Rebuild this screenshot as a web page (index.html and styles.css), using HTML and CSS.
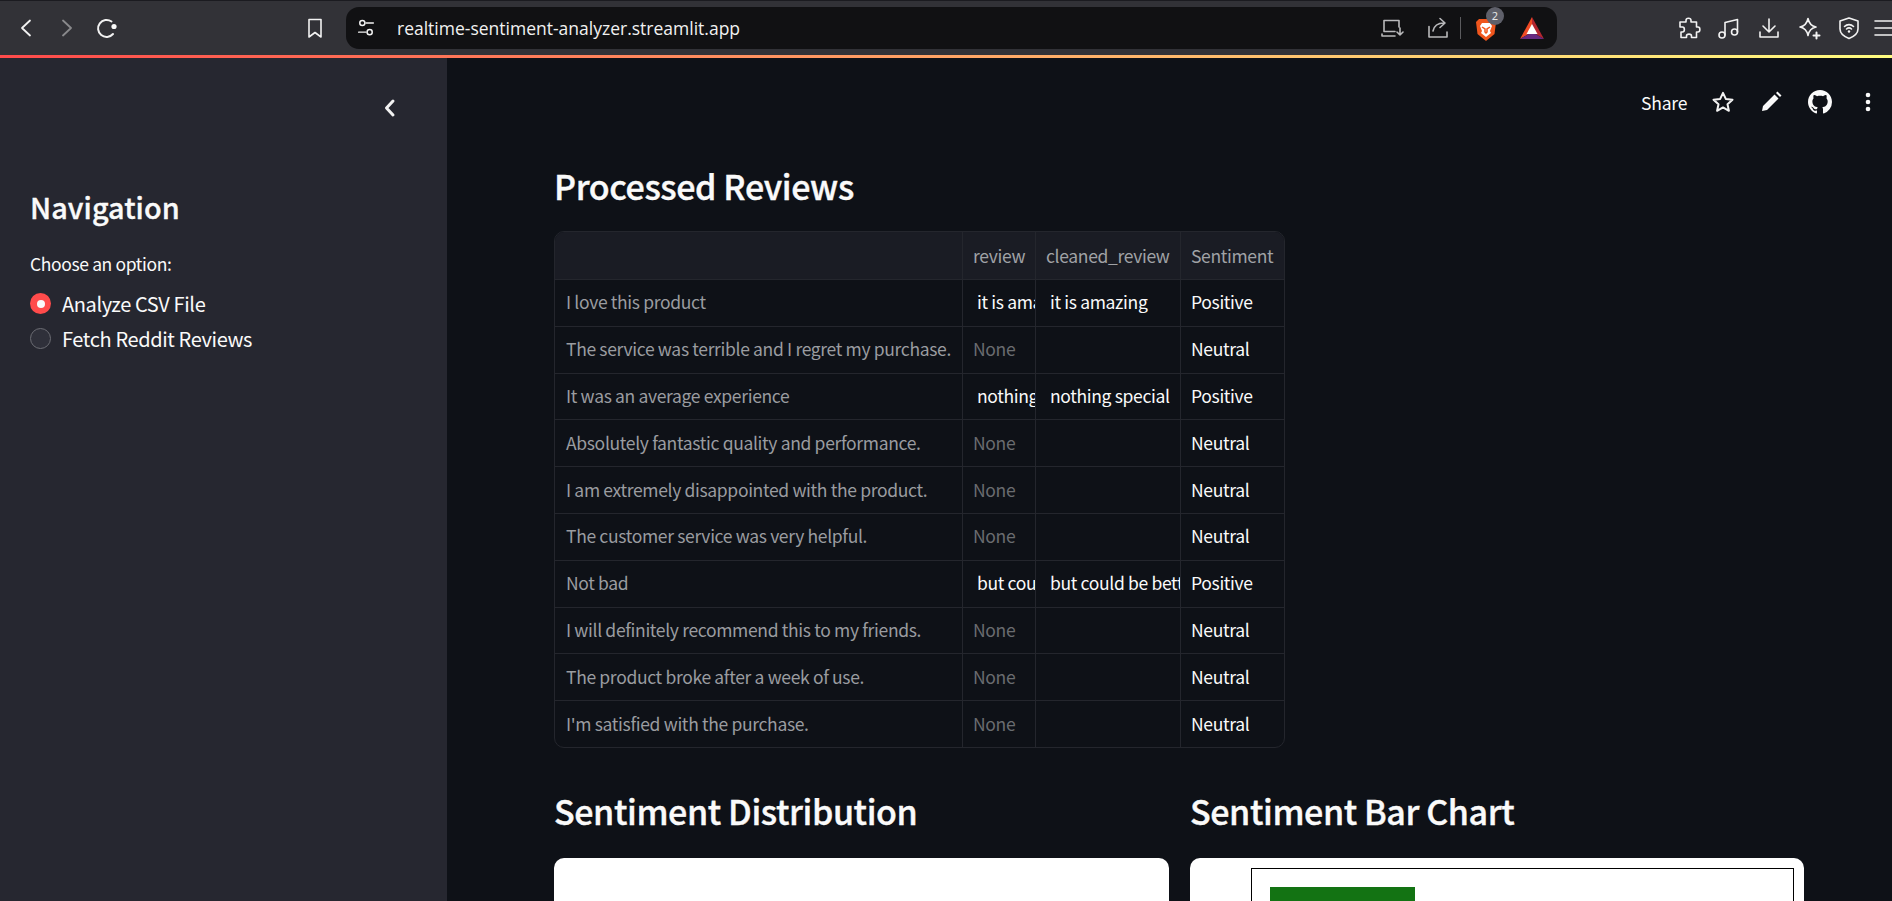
FILE: index.html
```html
<!DOCTYPE html>
<html lang="en">
<head>
<meta charset="utf-8">
<title>Processed Reviews</title>
<link rel="stylesheet" href="styles.css">
</head>
<body>
<header class="chrome">
  <svg class="ic nav-back" viewBox="0 0 24 24"><path d="M16 4.500 8 12l8 7.500" class="st w15"/></svg>
  <svg class="ic nav-fwd" viewBox="0 0 24 24"><path d="m8 4.500 8 7.500-8 7.500" class="st w15"/></svg>
  <svg class="ic nav-reload" viewBox="0 0 24 24"><path d="M18 18a8.500 8.500 0 1 1-1.500-12.500" class="st w2"/><circle cx="19" cy="10.500" r="2.600" class="fl"/></svg>
  <svg class="ic nav-mark" viewBox="0 0 24 24"><path d="M6 3.500h12v17.500l-6-4.500-6 4.500z" class="st"/></svg>
  <div class="urlbar">
    <svg class="ic tune" viewBox="0 0 24 24"><circle cx="8" cy="6.500" r="2.800" class="st"/><path d="M12 6.500h8M4 16.500h8" class="st"/><circle cx="16" cy="16.500" r="2.800" class="st"/></svg>
    <span class="url">realtime-sentiment-analyzer.streamlit.app</span>
    <svg class="ic cast" viewBox="0 0 24 24"><path d="M19 11V4.500H4v11M2 18v2h13M4 15.500h11M20 12v7m-3-3 3 3 3-3" class="st dim"/></svg>
    <svg class="ic share" viewBox="0 0 24 24"><path d="M4 10.500v10.500h18v-5M8 15c1-5 5-8 11-8m-4-4.500 5 4.500-5 4.500" class="st dim"/></svg>
    <span class="sep"></span>
    <span class="brave">
      <svg class="ic" viewBox="0 0 24 24"><path d="M5 2h14l3 3-1.500 12L12 24 3.500 17 2 5z" class="orange"/><path d="M8 6h8l2 3-2 5 1 2-5 4-5-4 1-2-2-5z" class="lion"/><path d="m8 10 3 2v3l1 1 1-1v-3l3-2" class="lionline"/></svg>
      <b class="badge">2</b>
    </span>
    <svg class="ic bat" viewBox="0 0 26 24"><path d="M13 1 1 23l12-7z" class="bat-l"/><path d="M13 1v15l12 7z" class="bat-r"/><path d="m1 23 12-7 12 7z" class="bat-b"/><path d="m13 8-5.500 10h11z" class="bat-c"/></svg>
  </div>
  <svg class="ic puzzle" viewBox="0 0 24 24"><path d="M9 4.500C9 1.500 14 1.500 14 4.500V6h5.500v5h1.500c2.500 0 2.500 5 0 5h-1.500v5.500H14.500V20c0-2.500-5-2.500-5 0v1.500H4V16h1.500c2.500 0 2.500-5 0-5H3V6h6z" class="st"/></svg>
  <svg class="ic music" viewBox="0 0 24 24"><path d="M8 19V6.500L20.500 3.500V16" class="st"/><circle cx="5" cy="19" r="3" class="st"/><circle cx="17.500" cy="16" r="3" class="st"/></svg>
  <svg class="ic down" viewBox="0 0 24 24"><path d="M12 3v13m-6-6 6 6 6-6M3 16v5h18v-5" class="st"/></svg>
  <svg class="ic spark" viewBox="0 0 24 24"><path d="M11 2.500c1 5 3 7.500 8 8.500-5 1-7 3.500-8 8.500-1-5-3-7.500-8-8.500 5-1 7-3.500 8-8.500z" class="st"/><path d="M19.500 16.500v6M16.500 19.500h6" class="st w2"/></svg>
  <svg class="ic shield" viewBox="0 0 24 24"><path d="M12 2 21 5v8c0 4-4 7.500-9 9.500C7 20.500 3 17 3 13V5z" class="st"/><path d="M7.500 10.500c2.500-2.500 6.500-2.500 9 0M9.500 13c1.500-1.300 3.500-1.300 5 0" class="st"/><circle cx="12" cy="15.500" r="1.200" class="fl"/></svg>
  <svg class="ic menu" viewBox="0 0 24 24"><path d="M2 5h22M2 12h22M2 19h22" class="st"/></svg>
</header>
<div class="deco"></div>
<div class="app">
  <aside class="sidebar">
    <div class="collapse">
      <svg class="chev" viewBox="0 0 24 24"><path d="M15 5 8.500 12l6.500 7" class="st w3"/></svg>
    </div>
    <h2 class="nav-title">Navigation</h2>
    <div class="radio-label">Choose an option:</div>
    <div class="radio-row"><span class="dot on"></span><span>Analyze CSV File</span></div>
    <div class="radio-row"><span class="dot"></span><span>Fetch Reddit Reviews</span></div>
  </aside>
  <main class="main">
    <div class="topbar">
      <span class="share-txt">Share</span>
      <svg class="tb-ic star" viewBox="0 0 24 24"><path d="m12 2.800 2.800 6.100 6.700.8-5 4.500 1.400 6.600-5.900-3.400-5.900 3.400 1.400-6.600-5-4.500 6.700-.8z" class="st w2"/></svg>
      <svg class="tb-ic pen" viewBox="0 0 24 24"><path d="M3 21l1-5L15.500 4.500l4 4L8 20zM17 3l1.500-1.500 4 4L21 7z" class="fl"/></svg>
      <svg class="tb-ic gh" viewBox="0 0 16 16"><path class="fl" d="M8 0C3.580 0 0 3.580 0 8c0 3.540 2.290 6.530 5.470 7.590.4.070.55-.17.55-.38 0-.19-.01-.82-.01-1.490-2.010.37-2.530-.49-2.690-.94-.09-.23-.48-.94-.82-1.130-.28-.15-.68-.52-.01-.53.630-.01 1.080.58 1.230.82.720 1.210 1.870.870 2.330.660.070-.520.280-.870.510-1.070-1.780-.2-3.640-.890-3.640-3.950 0-.870.310-1.590.820-2.150-.08-.2-.36-1.020.08-2.120 0 0 .67-.21 2.200.820.640-.18 1.320-.27 2-.27s1.360.09 2 .27c1.530-1.040 2.200-.82 2.200-.82.440 1.100.160 1.920.080 2.120.510.560.820 1.270.820 2.150 0 3.070-1.870 3.750-3.650 3.950.29.250.54.730.54 1.480 0 1.070-.01 1.930-.01 2.200 0 .21.150.46.550.38A8.010 8.010 0 0 0 16 8c0-4.420-3.580-8-8-8z"/></svg>
      <svg class="tb-ic dots" viewBox="0 0 24 24"><circle cx="12" cy="5" r="2.300" class="fl"/><circle cx="12" cy="12" r="2.300" class="fl"/><circle cx="12" cy="19" r="2.300" class="fl"/></svg>
    </div>
    <h2 class="h-main">Processed Reviews</h2>
    <div class="table-wrap">
      <table class="df">
        <colgroup><col class="c0"><col class="c1"><col class="c2"><col class="c3"></colgroup>
        <thead><tr><th></th><th>review</th><th>cleaned_review</th><th>Sentiment</th></tr></thead>
        <tbody>
          <tr><td class="idx">I love this product</td><td class="sp">it is amazing</td><td class="sp">it is amazing</td><td>Positive</td></tr>
          <tr><td class="idx">The service was terrible and I regret my purchase.</td><td class="none">None</td><td></td><td>Neutral</td></tr>
          <tr><td class="idx">It was an average experience</td><td class="sp">nothing special</td><td class="sp">nothing special</td><td>Positive</td></tr>
          <tr><td class="idx">Absolutely fantastic quality and performance.</td><td class="none">None</td><td></td><td>Neutral</td></tr>
          <tr><td class="idx">I am extremely disappointed with the product.</td><td class="none">None</td><td></td><td>Neutral</td></tr>
          <tr><td class="idx">The customer service was very helpful.</td><td class="none">None</td><td></td><td>Neutral</td></tr>
          <tr><td class="idx">Not bad</td><td class="sp">but could be better</td><td class="sp">but could be better</td><td>Positive</td></tr>
          <tr><td class="idx">I will definitely recommend this to my friends.</td><td class="none">None</td><td></td><td>Neutral</td></tr>
          <tr><td class="idx">The product broke after a week of use.</td><td class="none">None</td><td></td><td>Neutral</td></tr>
          <tr><td class="idx">I'm satisfied with the purchase.</td><td class="none">None</td><td></td><td>Neutral</td></tr>
        </tbody>
      </table>
    </div>
    <div class="cols">
      <section class="col">
        <h2 class="h-main">Sentiment Distribution</h2>
        <div class="card"></div>
      </section>
      <section class="col">
        <h2 class="h-main">Sentiment Bar Chart</h2>
        <div class="card">
          <div class="frame"><div class="bar"></div></div>
        </div>
      </section>
    </div>
  </main>
</div>
</body>
</html>
```
FILE: styles.css
```css
* { box-sizing: border-box; }
html, body { margin: 0; height: 901px; overflow: hidden; background: #0e1117; }
body { font-family: "Noto Sans CJK SC", "Noto Sans", sans-serif; color: #fafafa; }

.st { fill: none; stroke: #f2f2f2; stroke-width: 1.6; stroke-linecap: round; stroke-linejoin: round; }
.fl { fill: #fafafa; }
.w15 { stroke-width: 1.8; }
.w2 { stroke-width: 2; }
.w3 { stroke-width: 3; }
.dim { stroke: #b9b9bb; }

.chrome { height: 55px; background: #323237; border-top: 1px solid #1b1b20; display: flex; align-items: center; overflow: hidden; }
.ic { width: 24px; height: 24px; flex: none; display: block; }
.nav-back { margin-left: 14px; margin-top: -1px; }
.nav-fwd { margin-left: 17px; margin-top: -1px; opacity: .45; }
.nav-reload { margin-left: 16px; margin-top: -1px; }
.nav-mark { margin-left: 184px; margin-top: -1px; }
.urlbar { margin-left: 19px; flex: none; width: 1211px; height: 42px; margin-top: -1px; background: #111113; border-radius: 13px; display: flex; align-items: center; }
.tune { margin-left: 9px; width: 22px; height: 22px; }
.url { margin-left: 20px; font-family: "Open Sans", sans-serif; font-size: 17.5px; color: #f1f1f1; white-space: nowrap; width: 960px; flex: none; }
.cast { margin-left: 23px; }
.share { margin-left: 21px; }
.sep { width: 1px; height: 22px; background: #5b5b5e; margin-left: 11px; flex: none; }
.brave { position: relative; display: block; width: 24px; height: 28px; margin-left: 13px; padding-top: 3px; flex: none; }
.orange { fill: #f0561d; }
.lion { fill: #fff; }
.lionline { fill: none; stroke: #f0561d; stroke-width: 1.5; }
.badge { position: absolute; left: 12px; top: -7px; width: 18px; height: 18px; border-radius: 50%; background: #5f606a; color: #e6e6e6; font: 400 11px/18px "Noto Sans", sans-serif; text-align: center; }
.bat { margin-left: 21px; width: 26px; height: 24px; }
.bat-l { fill: #ef4a24; }
.bat-r { fill: #b3262f; }
.bat-b { fill: #66297f; }
.bat-c { fill: #fff; }
.puzzle { margin-left: 120px; }
.music { margin-left: 16px; }
.down { margin-left: 16px; }
.spark { margin-left: 16px; }
.shield { margin-left: 16px; }
.menu { margin-left: 12px; }

.deco { height: 3px; background: linear-gradient(90deg, #ff4b4b, #fffd80); }

.app { display: flex; height: 843px; }
.sidebar { width: 447px; flex: none; background: #262730; padding: 0 30px; font-size: 20px; letter-spacing: -.38px; }
.collapse { height: 128px; display: flex; justify-content: flex-end; padding: 38px 0 0; margin-right: 13px; }
.chev { width: 28px; height: 24px; }
.nav-title { margin: 0; font-size: 28.8px; line-height: 40px; font-weight: 500; -webkit-text-stroke: .35px #fafafa; letter-spacing: .05px; padding-bottom: 25px; padding-top: 1px; }
.radio-label { font-size: 17.5px; line-height: 24px; padding: 0 0 10px; }
.radio-row { display: flex; align-items: center; height: 35px; gap: 11px; line-height: 30px; }
.dot { width: 21px; height: 21px; border-radius: 50%; background: #2f303a; border: 1px solid #6c6d74; flex: none; }
.dot.on { background: #ff4b4b; border: 0; display: flex; align-items: center; justify-content: center; }
.dot.on::after { content: ""; width: 8px; height: 8px; border-radius: 50%; background: #fafafa; }

.main { flex: 1; padding-left: 107px; min-width: 0; overflow: hidden; }
.topbar { height: 104px; display: flex; align-items: center; padding: 0 0 0 1087px; }
.share-txt { font-size: 17.5px; width: 53px; margin-top: -16px; letter-spacing: -.2px; }
.tb-ic { flex: none; width: 24px; height: 24px; margin-top: -16px; }
.star { margin-left: 17px; }
.pen { margin-left: 24px; }
.gh { margin-left: 25px; }
.dots { margin-left: 24px; }

.h-main { margin: 0; font-size: 34px; line-height: 48px; font-weight: 500; -webkit-text-stroke: .4px #fafafa; letter-spacing: -.4px; }
.table-wrap { margin-top: 21px; width: 731px; height: 517px; border: 1px solid #24262d; border-radius: 10px; overflow: hidden; }
.df { width: 731px; border-collapse: collapse; table-layout: fixed; font-size: 17.5px; letter-spacing: -.34px; margin: -1px 0 0 -1px; }
.c0 { width: 408px; }
.c1 { width: 73px; }
.c2 { width: 145px; }
.c3 { width: 105px; }
.df th, .df td { height: 46.8px; padding: 0 10px 2px; border: 1px solid #24262d; white-space: nowrap; overflow: hidden; font-weight: 400; text-align: left; }
.df th { height: 48px; padding-bottom: 0; background: #1a1c24; color: #a0a2a6; }
.df td { color: #fafafa; }
.df td.idx { color: #9a9ca0; padding-left: 11px; }
.df td.none { color: #6a6c70; }
.df td.sp { padding-left: 14px; padding-right: 0; }

.cols { display: grid; grid-template-columns: 615px 614px; column-gap: 21px; margin-top: 39px; }
.card { margin-top: 23px; height: 400px; background: #fff; border-radius: 10px; padding: 10px 10px 0 61px; }
.frame { height: 380px; border: 1px solid #000; padding: 18px 0 0 18px; }
.bar { width: 145px; height: 340px; background: #137313; }
```
